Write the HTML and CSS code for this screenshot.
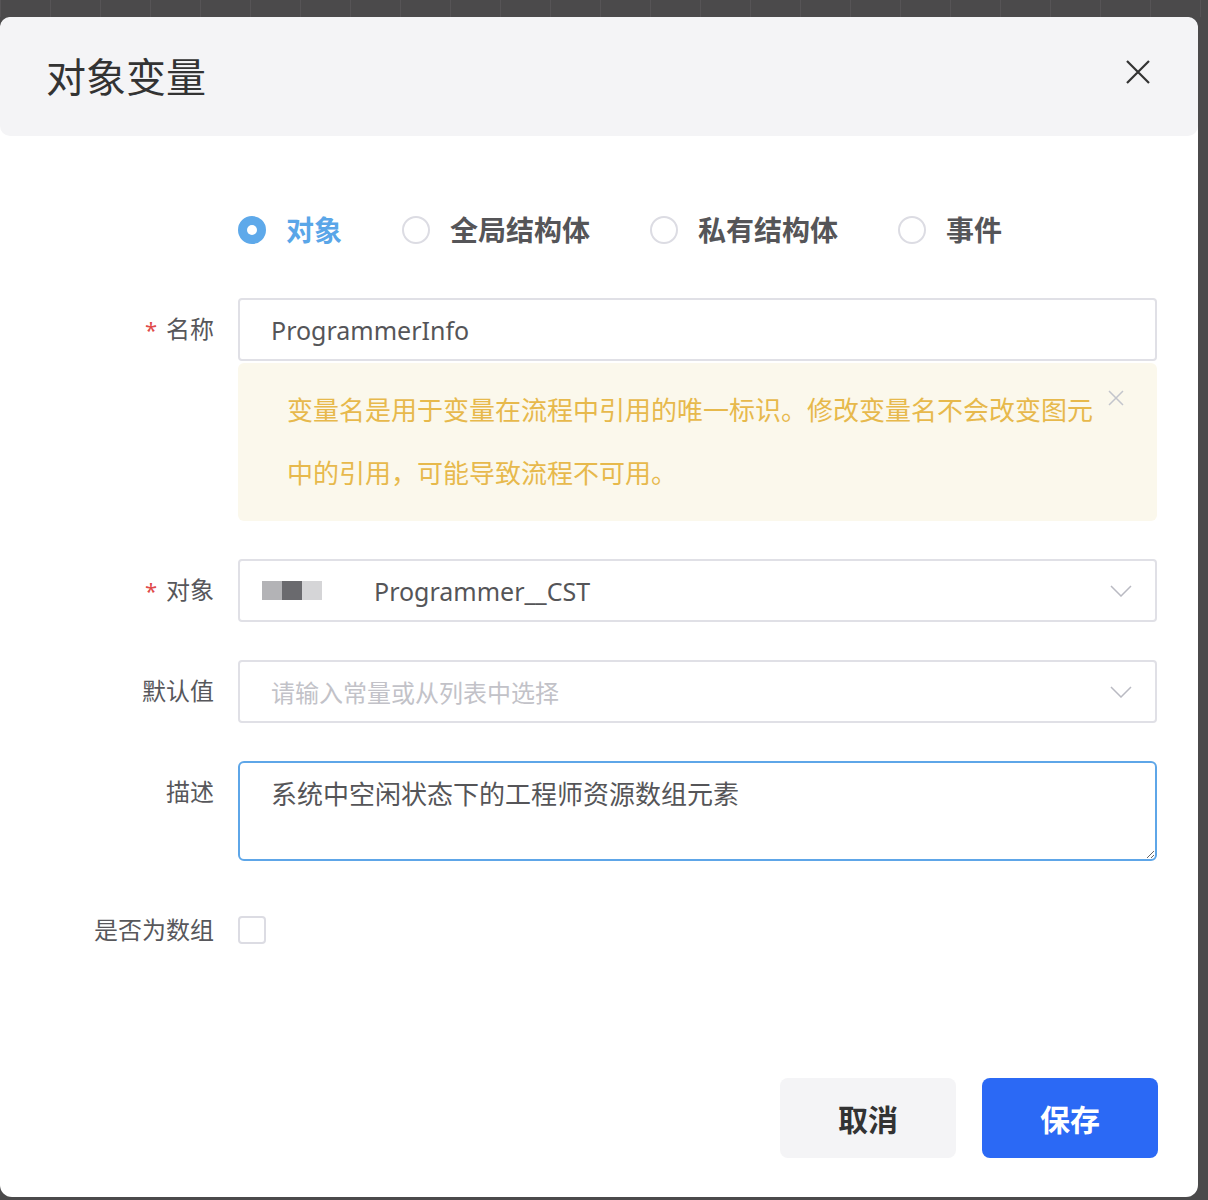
FILE: index.html
```html
<!DOCTYPE html>
<html lang="zh-CN">
<head>
  <meta charset="UTF-8" />
  <title>对象变量</title>
  <link rel="stylesheet" href="styles.css">
</head>
<body>
  <div class="dialog">
    <div class="dialog-header">
      <h2 class="dialog-title">对象变量</h2>
      <span class="dialog-close">
        <svg width="24" height="24" viewBox="0 0 24 24"><path d="M1 1 L23 23 M23 1 L1 23" stroke="#333" stroke-width="2.2" fill="none"/></svg>
      </span>
    </div>

    <div class="dialog-body">
      <div class="radio-group">
        <label class="radio checked"><span class="radio-circle"></span><span class="radio-text">对象</span></label>
        <label class="radio"><span class="radio-circle"></span><span class="radio-text">全局结构体</span></label>
        <label class="radio"><span class="radio-circle"></span><span class="radio-text">私有结构体</span></label>
        <label class="radio"><span class="radio-circle"></span><span class="radio-text">事件</span></label>
      </div>

      <div class="form-row">
        <div class="form-label"><span class="required">*</span>名称</div>
        <div class="form-control">
          <div class="input">ProgrammerInfo</div>
          <div class="alert">
            变量名是用于变量在流程中引用的唯一标识。修改变量名不会改变图元中的引用，可能导致流程不可用。
            <span class="alert-close">
              <svg width="16" height="16" viewBox="0 0 16 16"><path d="M1 1 L15 15 M15 1 L1 15" stroke="#c3c5cc" stroke-width="1.5" fill="none"/></svg>
            </span>
          </div>
        </div>
      </div>

      <div class="form-row">
        <div class="form-label"><span class="required">*</span>对象</div>
        <div class="form-control">
          <div class="select">
            <span class="masked"><i class="m1"></i><i class="m2"></i><i class="m3"></i></span>
            <span class="select-value">Programmer__CST</span>
            <svg class="chevron" width="22" height="12" viewBox="0 0 22 12"><polyline points="1,1 11,11 21,1" stroke="#b9bac2" stroke-width="1.5" fill="none"/></svg>
          </div>
        </div>
      </div>

      <div class="form-row">
        <div class="form-label">默认值</div>
        <div class="form-control">
          <div class="select">
            <span class="placeholder">请输入常量或从列表中选择</span>
            <svg class="chevron" width="22" height="12" viewBox="0 0 22 12"><polyline points="1,1 11,11 21,1" stroke="#b9bac2" stroke-width="1.5" fill="none"/></svg>
          </div>
        </div>
      </div>

      <div class="form-row">
        <div class="form-label">描述</div>
        <div class="form-control">
          <textarea class="textarea">系统中空闲状态下的工程师资源数组元素</textarea>
        </div>
      </div>

      <div class="form-row check-row">
        <div class="form-label">是否为数组</div>
        <div class="form-control">
          <span class="checkbox"></span>
        </div>
      </div>
    </div>

    <div class="dialog-footer">
      <button class="btn btn-cancel">取消</button>
      <button class="btn btn-save">保存</button>
    </div>
  </div>
</body>
</html>
```

FILE: styles.css
```css
* {
  margin: 0; padding: 0; box-sizing: border-box;
}
body {
  font-family: "Noto Sans", "Noto Sans CJK SC", sans-serif;
  background-color: #4b4a4b;
  background-image: repeating-linear-gradient(90deg, #565456 0 1px, transparent 1px 50px);
  background-size: 100% 17px;
  background-repeat: no-repeat;
  background-position: 0 0;
  width: 1208px;
  height: 1200px;
  overflow: hidden;
}
.dialog {
  width: 1198px;
  height: 1180px;
  margin-top: 17px;
  background-color: #fff;
  border-radius: 12px;
  display: flex;
  flex-direction: column;
}
.dialog-header {
  height: 119px;
  background-color: #f4f4f6;
  border-radius: 10px;
  display: flex;
  align-items: center;
  justify-content: space-between;
  padding: 0 48px 0 46px;
}
.dialog-title {
  font-size: 40px;
  font-weight: 400;
  color: #333;
  line-height: 1;
}
.dialog-close {
  display: flex;
  margin-top: -10px;
}
.dialog-body {
  padding-right: 41px;
}
.radio-group {
  display: flex;
  padding-left: 238px;
  margin-top: 74px;
  height: 40px;
  align-items: center;
  margin-bottom: 48px;
}
.radio {
  display: flex;
  align-items: center;
  margin-right: 60px;
}
.radio-circle {
  width: 28px;
  height: 28px;
  border-radius: 50%;
  border: 2px solid #dcdce3;
  margin-right: 20px;
  position: relative;
}
.radio-text {
  font-size: 28px;
  font-weight: 600;
  color: #555558;
  line-height: 40px;
}
.radio.checked .radio-circle {
  background-color: #5ea9ea;
  border-color: #5ea9ea;
}
.radio.checked .radio-circle::after {
  content: "";
  position: absolute;
  left: 7px;
  top: 7px;
  width: 10px;
  height: 10px;
  border-radius: 50%;
  background-color: #fff;
}
.radio.checked .radio-text {
  color: #5aa6e8;
}
.form-row {
  display: flex;
  margin-bottom: 38px;
}
.form-label {
  width: 238px;
  padding-right: 24px;
  text-align: right;
  font-size: 24px;
  color: #57575b;
  line-height: 62px;
  flex-shrink: 0;
}
.required {
  color: #e04a4a;
  font-size: 22px;
  margin-right: 9px;
}
.form-control {
  flex: 1;
}
.input, .select {
  height: 63px;
  border: 2px solid #e0e0e6;
  border-radius: 4px;
  padding-left: 31px;
  display: flex;
  align-items: center;
  font-size: 25px;
  color: #555558;
}
.alert {
  position: relative;
  margin-top: 2px;
  background-color: #fbf8ec;
  border-radius: 6px;
  padding: 16px 55px 16px 49px;
  font-size: 26px;
  line-height: 63px;
  color: #e7b94c;
}
.alert-close {
  position: absolute;
  right: 33px;
  top: 27px;
  display: flex;
}
.select {
  position: relative;
  padding-left: 22px;
}
.masked {
  display: flex;
  height: 19px;
  margin-right: 52px;
}
.masked i {
  width: 20px;
  height: 19px;
}
.m1 { background-color: #b3b3b6; }
.m2 { background-color: #6a6a6e; }
.m3 { background-color: #d5d5d7; }
.select-value {
  font-size: 25px;
}
.placeholder {
  font-size: 24px;
  color: #c2c2c8;
  padding-left: 9px;
}
.chevron {
  position: absolute;
  right: 23px;
  top: 24px;
}
.textarea {
  display: block;
  width: 100%;
  height: 100px;
  border: 2px solid #5ea6e8;
  border-radius: 6px;
  padding: 15px 31px;
  font-family: "Noto Sans", "Noto Sans CJK SC", sans-serif;
  font-size: 26px;
  line-height: 32px;
  color: #555558;
  resize: vertical;
  outline: none;
}
.check-row {
  margin-top: 55px;
  margin-bottom: 0;
}
.check-row .form-label {
  line-height: 28px;
}
.checkbox {
  display: block;
  width: 28px;
  height: 28px;
  border: 2px solid #dcdce3;
  border-radius: 4px;
}
.dialog-footer {
  margin-top: auto;
  display: flex;
  justify-content: flex-end;
  gap: 26px;
  padding: 0 40px 39px 0;
}
.btn {
  width: 176px;
  height: 80px;
  border: none;
  border-radius: 8px;
  font-family: "Noto Sans", "Noto Sans CJK SC", sans-serif;
  font-size: 30px;
  font-weight: 700;
  cursor: pointer;
}
.btn-cancel {
  background-color: #f4f4f6;
  color: #333;
}
.btn-save {
  background-color: #2b69f5;
  color: #fff;
}
```
